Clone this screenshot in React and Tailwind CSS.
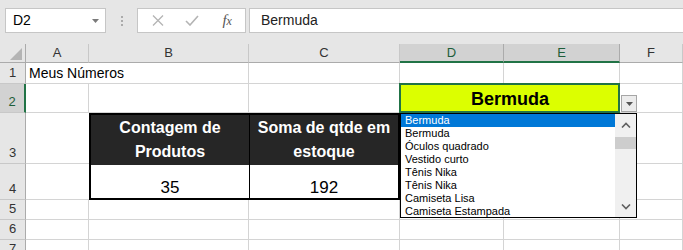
import React from 'react';

const items = [
    'Bermuda',
    'Bermuda',
    'Óculos quadrado',
    'Vestido curto',
    'Tênis Nika',
    'Tênis Nika',
    'Camiseta Lisa',
    'Camiseta Estampada',
];

const Chevron = ({ up }) => (
    <svg width="10" height="6" viewBox="0 0 10 6">
        <path d={up ? 'M1 5.5 L5 1.5 L9 5.5' : 'M1 0.5 L5 4.5 L9 0.5'} fill="none" stroke="#606060" strokeWidth="1.6" />
    </svg>
);

const colHead = 'flex items-center justify-center border-r border-b border-r-[#c8c8c8] border-b-[#ababab] bg-[#e6e6e6] text-[13px] text-[#333]';
const colHeadSel = 'flex items-center justify-center border-r border-b-2 border-r-[#ababab] border-b-[#217346] bg-[#d2d2d2] text-[13px] text-[#1e5e3a]';
const rowHead = 'flex items-end justify-center pb-[2px] leading-[16px] border-r border-b border-r-[#ababab] border-b-[#c8c8c8] bg-[#e6e6e6] text-[13px] text-[#333]';
const rowHeadSel = 'flex items-end justify-center pb-[2px] leading-[16px] border-r-2 border-b border-r-[#217346] border-b-[#c8c8c8] bg-[#d2d2d2] text-[13px] text-[#1e5e3a]';
const cell = 'border-r border-b border-[#d4d4d4] bg-white';

export default function App() {
    return (
        <div className="w-[683px] h-[250px] overflow-hidden bg-white font-['Liberation_Sans',Arial,sans-serif] text-black">
            {/* formula bar */}
            <div className="flex h-[44px] items-start bg-[#e6e6e6] pt-[8px] pl-[5px]">
                <div className="flex h-[25px] w-[101px] items-center justify-between border border-[#c6c6c6] bg-white pl-[7px] pr-[6px] text-[14px]">
                    <span>D2</span>
                    <svg width="7" height="4" viewBox="0 0 7 4"><path d="M0 0 H7 L3.5 4 Z" fill="#7a7a7a" /></svg>
                </div>
                <div className="flex w-[31px] h-[25px] flex-col items-center justify-center gap-[2px]">
                    <span className="h-[2px] w-[2px] bg-[#ababab]" />
                    <span className="h-[2px] w-[2px] bg-[#ababab]" />
                    <span className="h-[2px] w-[2px] bg-[#ababab]" />
                </div>
                <div className="flex h-[25px] w-[109px] items-center border border-[#c6c6c6] bg-white">
                    <div className="flex w-[36px] justify-center pl-[4px]">
                        <svg width="12" height="11" viewBox="0 0 12 11"><path d="M1 0.5 L11 10.5 M11 0.5 L1 10.5" stroke="#b4b4b4" strokeWidth="1.3" /></svg>
                    </div>
                    <div className="flex w-[36px] justify-center">
                        <svg width="14" height="11" viewBox="0 0 14 11"><path d="M1 6 L5 10 L13 1" fill="none" stroke="#b4b4b4" strokeWidth="1.6" /></svg>
                    </div>
                    <div className="w-[36px] text-center font-['Liberation_Serif',serif] italic text-[15px] leading-[20px] text-[#555]">
                        <span>f</span><span className="text-[12px]">x</span>
                    </div>
                </div>
                <div className="ml-[3px] flex h-[25px] flex-1 -mr-[2px] items-center border border-[#c6c6c6] bg-white pl-[11px] text-[14px] text-[#222]">
                    Bermuda
                </div>
            </div>

            {/* sheet */}
            <div className="grid grid-cols-[26px_63px_160px_151px_104px_116px_1fr] grid-rows-[19px_21px_29px_51px_36px_20px_20px_20px]">
                {/* header row */}
                <div className="flex items-end justify-end border-r border-b border-r-[#ababab] border-b-[#ababab] bg-[#e6e6e6] pr-[3px] pb-[2px]">
                    <svg width="12" height="12" viewBox="0 0 12 12"><path d="M12 0 V12 H0 Z" fill="#b4b4b4" /></svg>
                </div>
                <div className={colHead}>A</div>
                <div className={colHead}>B</div>
                <div className={colHead}>C</div>
                <div className={colHeadSel}>D</div>
                <div className={colHeadSel}>E</div>
                <div className={colHead}>F</div>

                {/* row 1 */}
                <div className={rowHead}>1</div>
                <div className="relative flex items-end border-b border-[#d4d4d4] bg-white pl-[3px] pb-[1px] text-[14px] leading-[18px] whitespace-nowrap z-[1]">Meus Números</div>
                <div className={cell} />
                <div className={cell} />
                <div className={cell} />
                <div className={cell} />
                <div className={cell} />

                {/* row 2 */}
                <div className={rowHeadSel}>2</div>
                <div className={cell} />
                <div className={cell} />
                <div className={cell} />
                <div className="relative col-span-2 flex items-center justify-center bg-[#dcff00] pt-[2px] text-[18px] font-bold">
                    Bermuda
                    <div className="pointer-events-none absolute -left-px -top-px right-0 bottom-0 border-2 border-[#217346]" />
                    <div className="absolute left-[221px] top-[11px] flex h-[17px] w-[16px] items-center justify-center border border-[#a6a6a6] bg-[#ececec] z-20">
                        <svg width="7" height="4" viewBox="0 0 7 4"><path d="M0 0 H7 L3.5 4 Z" fill="#555" /></svg>
                    </div>
                    <div className="absolute left-0 top-[29px] z-20 flex h-[105px] w-[237px] border border-black bg-white text-[11px] font-normal">
                        <div className="flex flex-1 flex-col overflow-hidden">
                            {items.map((it, i) => (
                                <div
                                    key={i}
                                    className={i === 0 ? 'h-[13px] shrink-0 bg-[#0078d7] pl-[4px] leading-[13px] text-white' : 'h-[13px] shrink-0 pl-[4px] leading-[13px] text-black'}
                                >
                                    {it}
                                </div>
                            ))}
                        </div>
                        <div className="flex w-[21px] flex-col bg-[#f0f0f0]">
                            <div className="flex h-[22px] items-center justify-center"><Chevron up /></div>
                            <div className="mt-px h-[12px] bg-[#cdcdcd]" />
                            <div className="flex-1" />
                            <div className="flex h-[21px] items-center justify-center"><Chevron /></div>
                        </div>
                    </div>
                </div>
                <div className={cell} />

                {/* rows 3-4 */}
                <div className={rowHead}>3</div>
                <div className="bg-white border-b border-[#d4d4d4]" />
                <div className="col-span-2 row-span-2 grid grid-cols-[159px_1fr] grid-rows-[50px_1fr] border-2 border-black bg-white">
                    <div className="flex flex-col items-center justify-end border-r border-black bg-[#262626] pb-[1px] text-[16px] font-bold leading-[24px] text-white">
                        <span>Contagem de</span>
                        <span>Produtos</span>
                    </div>
                    <div className="flex flex-col items-center justify-end bg-[#262626] pb-[1px] text-[16px] font-bold leading-[24px] text-white">
                        <span>Soma de qtde em</span>
                        <span>estoque</span>
                    </div>
                    <div className="flex items-end justify-center border-r border-black text-[17px] leading-[20px]">35</div>
                    <div className="flex items-end justify-center text-[17px] leading-[20px]">192</div>
                </div>
                <div className={cell} />
                <div className={cell} />
                <div className={cell} />

                <div className={rowHead}>4</div>
                <div className="bg-white border-b border-[#d4d4d4]" />
                <div className={cell} />
                <div className={cell} />
                <div className={cell} />

                {/* rows 5-7 */}
                {[5, 6, 7].map(r => (
                    <React.Fragment key={r}>
                        <div className={rowHead}>{r}</div>
                        <div className={cell} />
                        <div className={cell} />
                        <div className={cell} />
                        <div className={cell} />
                        <div className={cell} />
                        <div className={cell} />
                    </React.Fragment>
                ))}
            </div>
        </div>
    );
}
